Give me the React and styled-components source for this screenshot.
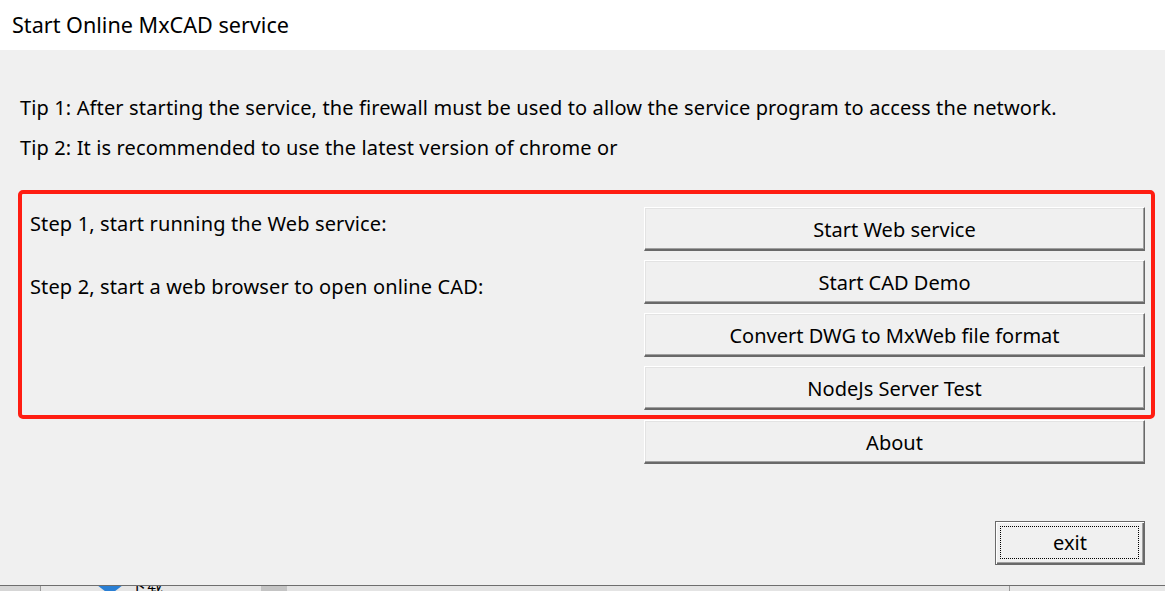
import React from "react";
import styled, { createGlobalStyle } from "styled-components";

const Global = createGlobalStyle`
  html, body { margin: 0; padding: 0; }
  body { width: 1165px; height: 591px; overflow: hidden; background: #f0f0f0; }
  * { box-sizing: border-box; }
`;

const Window = styled.div`
  width: 1165px;
  height: 591px;
  display: flex;
  flex-direction: column;
  font-family: "Noto Sans", "Noto Sans CJK SC", sans-serif;
  color: #000;
`;

const TitleBar = styled.div`
  height: 50px;
  background: #ffffff;
  display: flex;
  align-items: center;
  padding-left: 12px;
  font-size: 21.6px;
  padding-bottom: 1px;
`;

const Body = styled.div`
  flex: 1;
  background: #f0f0f0;
  display: flex;
  flex-direction: column;
  padding: 38px 10px 0 18px;
  border-bottom: 1px solid #6e6e6e;
`;

const Tip = styled.div`
  font-size: 20px;
  line-height: 40px;
  letter-spacing: 0.13px;
  padding-left: 2px;
`;

const Tips = styled.div`
  margin-bottom: 22px;
`;

const StepsBox = styled.div`
  width: 1137px;
  border: 4px solid #ff1d12;
  border-radius: 5px;
  display: grid;
  grid-template-columns: 1fr 501px;
  padding: 13px 6px 5px 8px;
`;

const StepTexts = styled.div`
  display: flex;
  flex-direction: column;
  gap: 31px;
  padding-top: 1px;
`;

const StepText = styled.div`
  font-size: 20px;
  line-height: 32px;
  letter-spacing: 0.13px;
`;

const ButtonColumn = styled.div`
  display: flex;
  flex-direction: column;
  gap: 9px;
`;

const Button = styled.button`
  height: 44px;
  width: 501px;
  background: #f0f0f0;
  border-style: solid;
  border-width: 1px 1px 2px 1px;
  border-color: #ffffff #696969 #696969 #ffffff;
  box-shadow: inset -1px -1px 0 #a0a0a0, inset 1px 1px 0 #e3e3e3;
  font-family: "Noto Sans", sans-serif;
  font-size: 20px;
  color: #000;
  padding: 2px 0 0 0;
  cursor: default;
`;

const BelowRow = styled.div`
  display: flex;
  justify-content: flex-end;
  padding-right: 10px;
  margin-top: ${(p) => p.$mt || "0px"};
`;

const ExitButton = styled.button`
  position: relative;
  width: 150px;
  height: 44px;
  background: #f0f0f0;
  border: 1px solid #6a6a6a;
  box-shadow: inset 1px 1px 0 #ffffff, inset -1px -1px 0 #696969, inset -2px -2px 0 #a0a0a0;
  font-family: "Noto Sans", sans-serif;
  font-size: 20px;
  color: #000;
  padding: 0 0 2px 0;
  cursor: default;
`;

const FocusRect = styled.span`
  position: absolute;
  left: 4px;
  top: 4px;
  right: 5px;
  bottom: 5px;
  border: 1px dotted #000;
  pointer-events: none;
`;

const Spacer = styled.div`
  flex: 1;
`;

const Taskbar = styled.div`
  height: 5px;
  display: flex;
  background: #e8e8e8;
  overflow: hidden;
`;

const TaskSeg = styled.div`
  width: ${(p) => p.$w}px;
  background: ${(p) => p.$bg};
  border-right: ${(p) => (p.$line ? "1px solid #9a9a9a" : "none")};
  position: relative;
  overflow: hidden;
`;

const TaskIcon = styled.svg`
  position: absolute;
  left: 56px;
  top: -1px;
`;

const TaskLabel = styled.span`
  position: absolute;
  left: 88px;
  top: -13px;
  font-family: "Noto Sans CJK SC", sans-serif;
  font-size: 17px;
  color: #000;
`;

export default function App() {
  return (
    <Window>
      <Global />
      <TitleBar>Start Online MxCAD service</TitleBar>
      <Body>
        <Tips>
          <Tip>
            Tip 1: After starting the service, the firewall must be used to allow the service program to access the network.
          </Tip>
          <Tip>Tip 2: It is recommended to use the latest version of chrome or</Tip>
        </Tips>
        <StepsBox>
          <StepTexts>
            <StepText>Step 1, start running the Web service:</StepText>
            <StepText>Step 2, start a web browser to open online CAD:</StepText>
          </StepTexts>
          <ButtonColumn>
            <Button>Start Web service</Button>
            <Button>Start CAD Demo</Button>
            <Button>Convert DWG to MxWeb file format</Button>
            <Button>NodeJs Server Test</Button>
          </ButtonColumn>
        </StepsBox>
        <BelowRow $mt="1px">
          <Button>About</Button>
        </BelowRow>
        <BelowRow $mt="57px">
          <ExitButton>
            exit
            <FocusRect />
          </ExitButton>
        </BelowRow>
        <Spacer />
      </Body>
      <Taskbar>
        <TaskSeg $w={41} $bg="#d6d6d6" $line />
        <TaskSeg $w={220} $bg="#e6e6e6">
          <TaskIcon width="26" height="8" viewBox="0 0 26 8">
            <path d="M0 0 H26 L13 10 Z" fill="#2a7fd4" />
          </TaskIcon>
          <TaskLabel>下载</TaskLabel>
        </TaskSeg>
        <TaskSeg $w={26} $bg="#c4c4c4" />
        <TaskSeg $w={723} $bg="#e4e4e4" $line />
        <TaskSeg $w={155} $bg="#e8e8e8" />
      </Taskbar>
    </Window>
  );
}
